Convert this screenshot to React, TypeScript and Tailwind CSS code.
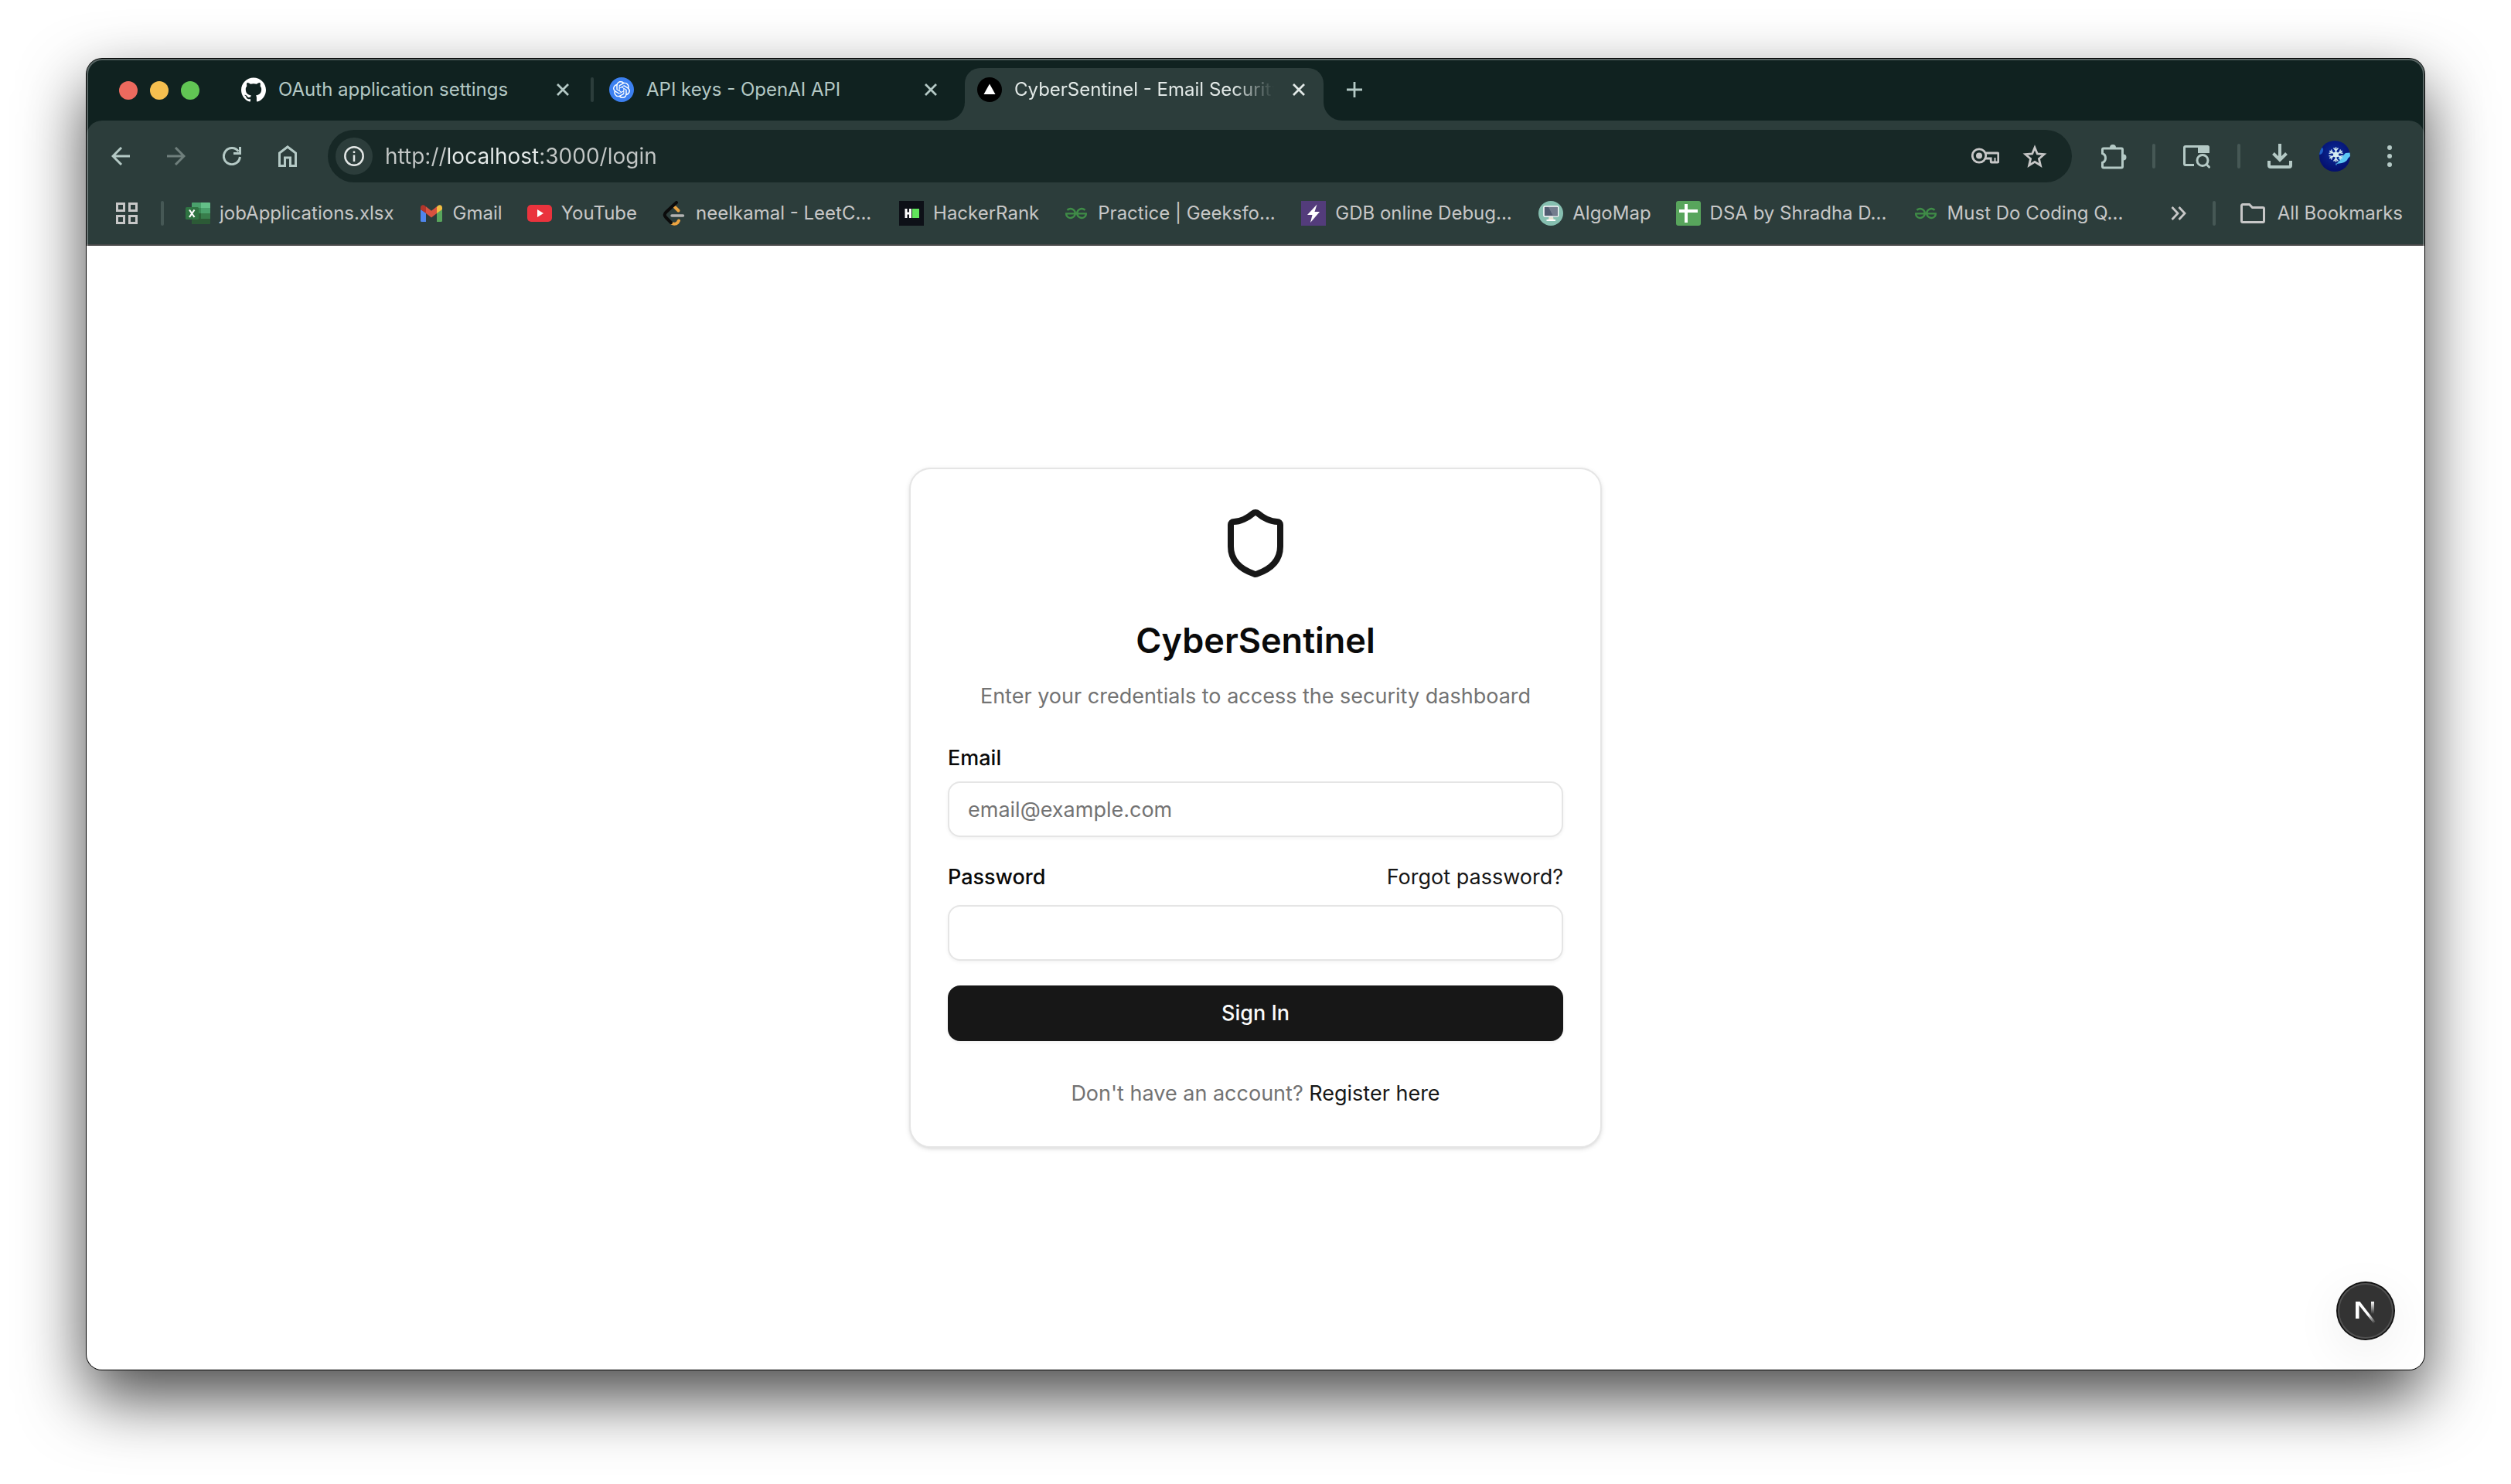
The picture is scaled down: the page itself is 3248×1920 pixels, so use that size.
import type { ReactNode } from "react";
import { Shield } from "lucide-react";
import { SiGeeksforgeeks, SiGithub, SiOpenai } from "react-icons/si";

/* ---------- toolbar icons ---------- */

const BackIcon = () => (
  <svg viewBox="0 0 24 24" className="size-6" fill="none" stroke="currentColor" strokeWidth="3">
    <path d="M24 12H2.5M13 1 2 12l11 11" />
  </svg>
);

const ForwardIcon = () => (
  <svg viewBox="0 0 24 24" className="size-6" fill="none" stroke="currentColor" strokeWidth="3">
    <path d="M0 12h21.5M11 1l11 11-11 11" />
  </svg>
);

const ReloadIcon = () => (
  <svg viewBox="0 0 24 24" className="size-6" fill="none" stroke="currentColor" strokeWidth="3">
    <path d="M22.4 13A10.5 10.5 0 1 1 20.5 6" />
    <path d="M22.5 0v8.5H14" />
  </svg>
);

const HomeIcon = () => (
  <svg viewBox="0 0 24 28" className="h-7 w-6" fill="none" stroke="currentColor" strokeWidth="3">
    <path d="M1.5 26.500V10L12 2l10.500 8v16.500H15.500V16h-7v10.500z" />
  </svg>
);

const InfoIcon = () => (
  <svg viewBox="0 0 26 26" className="size-[26px]" fill="none" stroke="currentColor" strokeWidth="2.500">
    <circle cx="13" cy="13" r="11.700" />
    <path d="M13 11.500V20M13 6.500V9" />
  </svg>
);

const KeyIcon = () => (
  <svg viewBox="0 0 36 22" className="h-[22px] w-9" fill="none" stroke="currentColor" strokeWidth="2.800">
    <circle cx="10" cy="10.500" r="8.700" />
    <circle cx="10" cy="10.500" r="4" fill="currentColor" stroke="none" />
    <path d="M18 7h16a.8.8 0 0 1 .8.8v10.400a.8.8 0 0 1-.8.800h-8a.8.8 0 0 1-.8-.8V14H18" />
    <path d="M30.500 13v6" strokeWidth="2" />
  </svg>
);

const StarIcon = () => (
  <svg viewBox="0 0 32 30" className="h-[30px] w-8" fill="none" stroke="currentColor" strokeWidth="2.800">
    <path d="m16 4 3.300 8 8.700.700-6.600 5.700 2 8.600L16 22.400 8.600 27l2-8.600L4 12.700l8.700-.7z" />
  </svg>
);

const PuzzleIcon = () => (
  <svg viewBox="0 0 34 34" className="size-[34px]" fill="none" stroke="currentColor" strokeWidth="3">
    <path d="M4 7h23a1.500 1.500 0 0 1 1.500 1.500v22A1.500 1.500 0 0 1 27 32H4a1.500 1.500 0 0 1-1.500-1.500V25.500a6.500 6.500 0 0 0 0-12V8.500A1.500 1.500 0 0 1 4 7z" />
    <path d="M12 6a4 4 0 0 1 8 0zM29.500 14.500a4 4 0 0 1 0 8z" fill="currentColor" stroke="none" />
  </svg>
);

const TabSearchIcon = () => (
  <svg viewBox="0 0 36 32" className="h-8 w-9" fill="none" stroke="currentColor" strokeWidth="3">
    <path d="M15 27.500H4A1.500 1.500 0 0 1 2.500 26V5A1.500 1.500 0 0 1 4 3.500h29" />
    <path d="M20 2h12.500A2.500 2.500 0 0 1 35 4.500V12H20z" fill="currentColor" stroke="none" />
    <circle cx="26" cy="21.500" r="7" />
    <path d="m30.500 26 5 5" />
  </svg>
);

const DownloadIcon = () => (
  <svg viewBox="0 0 32 32" className="size-8" fill="none" stroke="currentColor" strokeWidth="4">
    <path d="M16 0v21M7.500 12.500 16 21l8.500-8.500" />
    <path d="M2 22v6a2 2 0 0 0 2 2h24a2 2 0 0 0 2-2v-6" />
  </svg>
);

const MenuIcon = () => (
  <svg viewBox="0 0 6 28" className="h-7 w-1.5" fill="currentColor">
    <circle cx="3" cy="3" r="3" />
    <circle cx="3" cy="14" r="3" />
    <circle cx="3" cy="25" r="3" />
  </svg>
);

const CloseIcon = () => (
  <svg viewBox="0 0 16 16" className="size-4" fill="none" stroke="currentColor" strokeWidth="2.800">
    <path d="m1 1 14 14M15 1 1 15" />
  </svg>
);

const PlusIcon = () => (
  <svg viewBox="0 0 20 20" className="size-5" fill="none" stroke="currentColor" strokeWidth="2.800">
    <path d="M10 0v20M0 10h20" />
  </svg>
);

const GridIcon = () => (
  <svg viewBox="0 0 28 28" className="size-7" fill="none" stroke="currentColor" strokeWidth="3">
    <path d="M1.500 1.500h9v9h-9zM17.500 1.500h9v9h-9zM1.500 17.500h9v9h-9zM17.500 17.500h9v9h-9z" />
  </svg>
);

const FolderIcon = () => (
  <svg viewBox="0 0 32 26" className="h-[26px] w-8" fill="none" stroke="currentColor" strokeWidth="3">
    <path d="M3 1.500h8.500l4 4H29A1.500 1.500 0 0 1 30.500 7v16a1.500 1.500 0 0 1-1.500 1.500H3A1.500 1.500 0 0 1 1.500 23V3A1.500 1.500 0 0 1 3 1.500z" />
  </svg>
);

const MoreIcon = () => (
  <svg viewBox="0 0 20 18" className="h-[18px] w-5" fill="none" stroke="currentColor" strokeWidth="2.800">
    <path d="m1.500 1 7.500 8-7.500 8M10.500 1l7.500 8-7.500 8" />
  </svg>
);

const Avatar = () => (
  <svg viewBox="0 0 40 40" className="size-10">
    <defs>
      <radialGradient id="sky" cx="50%" cy="40%" r="60%">
        <stop offset="0" stopColor="#0a2a9a" />
        <stop offset="1" stopColor="#040f6c" />
      </radialGradient>
      <clipPath id="round">
        <circle cx="20" cy="20" r="20" />
      </clipPath>
    </defs>
    <g clipPath="url(#round)">
      <path fill="url(#sky)" d="M0 0h40v40H0z" />
      <path fill="#1f5fc4" d="M0 9q6-1 5 4t-5 5z" />
      <path fill="#5cc8f5" d="M40 15.500l-6 .5-4 4-6 3 3 2-5 5 7-1q7-2 8-6l3-3z" />
      <g stroke="#d5ecf2" strokeWidth="1.800">
        <path d="M21.500 8.500v19M13.300 13.300l16.400 9.500M13.300 22.700l16.400-9.500" />
        <path d="m18.500 9.500 3 3.500 3-3.500M18.500 26.500l3-3.500 3 3.500M12.500 16.500l4.500-1-1.500-4M30.500 16.500l-4.500-1 1.500-4M12.500 19.500l4.500 1-1.500 4M30.500 19.500l-4.500 1 1.500 4" strokeWidth="1.300" fill="none" />
      </g>
      <circle cx="21.500" cy="18" r="3.500" fill="#d5ecf2" />
      <path stroke="#4aa8e8" strokeWidth="1.500" strokeDasharray="2 2" d="M22 29.500v4" />
    </g>
  </svg>
);

/* ---------- favicons ---------- */

const OpenAiFavicon = () => (
  <span className="flex size-8 items-center justify-center rounded-full bg-[#3c80f0] text-white">
    <SiOpenai className="size-[22px]" />
  </span>
);

const VercelFavicon = () => (
  <svg viewBox="0 0 32 32" className="size-8">
    <circle cx="16" cy="16" r="16" fill="#000" />
    <path d="M16 8.500 23.500 22h-15z" fill="#fff" />
  </svg>
);

const ExcelFavicon = () => (
  <svg viewBox="0 0 32 28" className="h-7 w-8">
    <path fill="#4aa16c" d="M9 0h11v7H8V1a1 1 0 0 1 1-1z" />
    <path fill="#63c088" d="M20 0h11a1 1 0 0 1 1 1v6H20z" />
    <path fill="#3a8a55" d="M8 7h12v7H8z" />
    <path fill="#4aa16c" d="M20 7h12v7H20z" />
    <path fill="#2c6238" d="M8 14h12v14H9a1 1 0 0 1-1-1z" />
    <path fill="#387d4b" d="M20 14h12v7H20z" />
    <path fill="#2c5a36" d="M20 21h12v6a1 1 0 0 1-1 1H9l-1-7z" />
    <rect y="6" width="17" height="16" rx="1.500" fill="#2f7442" />
    <path d="m5 9.500 6.500 9.500M11.500 9.500 5 19" stroke="#fff" strokeWidth="2.200" />
  </svg>
);

const GmailFavicon = () => (
  <svg viewBox="0 0 32 32" className="size-8">
    <path fill="#4f86ec" d="M2 11v14.500A1.500 1.500 0 0 0 3.500 27H9V15z" />
    <path fill="#58a55c" d="M30 11v14.500a1.500 1.500 0 0 1-1.500 1.500H23V15z" />
    <path fill="#b3362b" d="M2 8.500C2 5.500 5 4.200 7.500 6L9 7.500V16l-7-5z" />
    <path fill="#f2bd42" d="M30 8.500c0-3-3-4.300-5.500-2.500L23 7.500V16l7-5z" />
    <path fill="#d9523f" d="m9 7.300 7 5.500 7-5.500V16l-7 5.500L9 16z" />
  </svg>
);

const YouTubeFavicon = () => (
  <svg viewBox="0 0 32 32" className="size-8">
    <rect y="5" width="32" height="22" rx="5" fill="#ea333d" />
    <path d="M13 11v10l8-5z" fill="#fff" />
  </svg>
);

const LeetCodeFavicon = () => (
  <svg viewBox="0 0 32 32" className="size-8" fill="none" strokeWidth="4" strokeLinecap="round">
    <path stroke="#eba340" d="m17 8 4.500 4.500M13.500 29q4 2 7-1l1.500-2.500" />
    <path stroke="#0b0b0b" d="M19 2 5.500 14.500q-3.500 3.500 0 7L12 28" />
    <path stroke="#b3b3b3" strokeWidth="3.500" d="M13 19h14.500" />
  </svg>
);

const HackerRankFavicon = () => (
  <svg viewBox="0 0 32 32" className="size-8">
    <path fill="#0d1017" d="M0 0h32v32H0z" />
    <path d="M9 10v12M14.500 10v12M9 16h5.500" stroke="#fff" strokeWidth="3" />
    <path fill="#61e35c" d="M17 10h9v12h-9z" />
  </svg>
);

const GeeksFavicon = () => <SiGeeksforgeeks className="size-8 px-0.5 text-[#3f8c47]" />;

const GdbFavicon = () => (
  <svg viewBox="0 0 32 32" className="size-8">
    <path fill="#533c7b" d="M0 0h32v32H0z" />
    <path fill="#fff" d="M20.500 4.500 8 18h6.500L12 28 24 14h-6.500z" />
  </svg>
);

const AlgoMapFavicon = () => (
  <svg viewBox="0 0 32 32" className="size-8">
    <circle cx="16" cy="16" r="16" fill="#86bfb0" />
    <rect x="7" y="7" width="18.500" height="13" rx="1" fill="#515b70" stroke="#fff" strokeWidth="1.500" />
    <path fill="#747d8e" d="M13 8h12v11.500h-6z" />
    <path fill="#e8e3d2" d="M13.500 21h5.500l.8 3.500h-7z" />
    <path fill="#fff" d="M10.500 24h11.500v2H10.500z" />
  </svg>
);

const DsaFavicon = () => (
  <svg viewBox="0 0 32 32" className="size-8">
    <rect width="32" height="32" rx="3" fill="#58a55c" />
    <path fill="#fff" d="M11 4h4v7h13v4H15v13h-4V15H4v-4h7z" />
  </svg>
);

/* ---------- browser chrome ---------- */

type TabProps = { icon: ReactNode; title: string; active?: boolean };

const flare = "absolute bottom-0 size-6 text-[#2c3d3b]";

function Tab({ icon, title, active = false }: TabProps) {
  const tone = active
    ? "bg-[#2c3d3b] text-[#e2e9e7]"
    : "text-[#b4c9c5]";
  return (
    <div className={`relative flex h-[68px] w-[464px] items-start gap-4 rounded-t-[20px] px-4 pt-3 ${tone}`}>
      {active && (
        <>
          <svg viewBox="0 0 24 24" className={`${flare} -left-6`} fill="currentColor">
            <path d="M24 0v24H0A24 24 0 0 0 24 0z" />
          </svg>
          <svg viewBox="0 0 24 24" className={`${flare} -right-6`} fill="currentColor">
            <path d="M0 0v24h24A24 24 0 0 1 0 0z" />
          </svg>
        </>
      )}
      <button type="button" className="flex min-w-0 flex-1 items-center gap-4 text-left">
        <span className="shrink-0">{icon}</span>
        <span
          className={`min-w-0 flex-1 overflow-hidden text-2xl whitespace-nowrap ${
            active ? "[mask-image:linear-gradient(to_right,black_84%,transparent)]" : ""
          }`}
        >
          {title}
        </span>
      </button>
      <button type="button" aria-label={`Close ${title}`} className="flex size-8 items-center justify-center">
        <CloseIcon />
      </button>
    </div>
  );
}

function TabStrip() {
  return (
    <div className="flex h-20 items-end bg-[#102220]">
      <div className="flex h-[68px] w-[184px] items-start gap-4 pt-[17px] pl-[42px]">
        <span className="size-6 rounded-full bg-[#ed6a5e]" />
        <span className="size-6 rounded-full bg-[#f5bf4f]" />
        <span className="size-6 rounded-full bg-[#61c554]" />
      </div>
      <Tab icon={<SiGithub className="size-8 text-white" />} title="OAuth application settings" />
      <span className="mx-1 mb-6 h-8 w-1 rounded-full bg-[#2c3d3b]" />
      <Tab icon={<OpenAiFavicon />} title="API keys - OpenAI API" />
      <span className="w-3" />
      <Tab icon={<VercelFavicon />} title="CyberSentinel - Email Security" active />
      <button
        type="button"
        aria-label="New tab"
        className="mb-6 ml-6 flex size-8 items-center justify-center text-[#b4c9c5]"
      >
        <PlusIcon />
      </button>
    </div>
  );
}

function IconButton({ label, className = "", children }: { label: string; className?: string; children: ReactNode }) {
  return (
    <button type="button" aria-label={label} className={`flex h-12 items-center justify-center ${className}`}>
      {children}
    </button>
  );
}

const Divider = () => <span className="h-8 w-1 rounded-full bg-[#465855]" />;

function Toolbar() {
  return (
    <div className="flex h-[92px] items-center rounded-t-[20px] bg-[#2c3d3b] pr-[42px] pl-5 text-[#b4c9c5]">
      <div className="flex">
        <IconButton label="Back" className="w-12"><BackIcon /></IconButton>
        <IconButton label="Forward" className="ml-6 w-12 text-[#6f7f7c]"><ForwardIcon /></IconButton>
        <IconButton label="Reload" className="ml-6 w-12"><ReloadIcon /></IconButton>
        <IconButton label="Home" className="ml-6 w-12"><HomeIcon /></IconButton>
      </div>
      <div className="ml-7 flex h-[68px] min-w-0 flex-1 items-center rounded-full bg-[#172826] pr-8 pl-2.5">
        <IconButton label="View site information" className="w-12 rounded-full bg-[#2c3d3b] text-[#e2e6e5]">
          <InfoIcon />
        </IconButton>
        <input
          aria-label="Address"
          type="text"
          defaultValue="http://localhost:3000/login"
          className="ml-4 min-w-0 flex-1 bg-[linear-gradient(to_right,#c3c7c6_80px,#e6ebea_80px,#e6ebea_199px,#c3c7c6_199px)] bg-clip-text text-[28px] text-transparent outline-none"
        />
        <div className="flex items-center gap-[30px] text-[#c7c7c7]">
          <IconButton label="Manage passwords" className="w-9"><KeyIcon /></IconButton>
          <IconButton label="Bookmark this page" className="w-8"><StarIcon /></IconButton>
        </div>
      </div>
      <IconButton label="Extensions" className="ml-9 w-9"><PuzzleIcon /></IconButton>
      <div className="ml-8 flex items-center gap-[35px]">
        <Divider />
        <IconButton label="Search tabs" className="w-9"><TabSearchIcon /></IconButton>
        <Divider />
        <IconButton label="Downloads" className="w-8"><DownloadIcon /></IconButton>
        <IconButton label="Profile" className="w-10"><Avatar /></IconButton>
      </div>
      <IconButton label="Customize and control" className="ml-12 w-1.5"><MenuIcon /></IconButton>
    </div>
  );
}

type Bookmark = { label: string; icon: ReactNode; clipped?: boolean };

const bookmarks: Bookmark[] = [
  { label: "jobApplications.xlsx", icon: <ExcelFavicon /> },
  { label: "Gmail", icon: <GmailFavicon /> },
  { label: "YouTube", icon: <YouTubeFavicon /> },
  { label: "neelkamal - LeetC...", icon: <LeetCodeFavicon />, clipped: true },
  { label: "HackerRank", icon: <HackerRankFavicon /> },
  { label: "Practice | Geeksfo...", icon: <GeeksFavicon />, clipped: true },
  { label: "GDB online Debug...", icon: <GdbFavicon />, clipped: true },
  { label: "AlgoMap", icon: <AlgoMapFavicon /> },
  { label: "DSA by Shradha D...", icon: <DsaFavicon />, clipped: true },
  { label: "Must Do Coding Q...", icon: <GeeksFavicon />, clipped: true },
];

function BookmarksBar() {
  return (
    <nav
      aria-label="Bookmarks"
      className="flex h-[70px] items-start border-b-2 border-[#4a4a4a] bg-[#2c3d3b] pt-3 pr-7 pl-[38px] text-2xl whitespace-nowrap text-[#c7c7c7]"
    >
      <button type="button" aria-label="Apps" className="flex h-8 items-center">
        <GridIcon />
      </button>
      <span className="ml-[30px] h-8 w-1 rounded-full bg-[#465855]" />
      <div className="ml-7 flex min-w-0 flex-1 gap-8">
        {bookmarks.map((b) => (
          <a key={b.label} href="#" className="flex h-8 items-center gap-3">
            {b.icon}
            <span className={b.clipped ? "w-[231px]" : ""}>{b.label}</span>
          </a>
        ))}
      </div>
      <div className="flex h-8 items-center">
        <button type="button" aria-label="More bookmarks">
          <MoreIcon />
        </button>
        <span className="ml-[34px] h-8 w-1 rounded-full bg-[#465855]" />
        <button type="button" className="ml-8 flex items-center gap-4">
          <FolderIcon />
          All Bookmarks
        </button>
      </div>
    </nav>
  );
}

/* ---------- login page ---------- */

const field =
  "h-[72px] w-full rounded-2xl border-2 border-[#e5e5e5] bg-white px-6 text-[27px] leading-10 text-[#0a0a0a] shadow-[0_2px_4px_rgba(0,0,0,0.05)] outline-none placeholder:text-[#737373]";

function LoginCard() {
  return (
    <form
      onSubmit={(e) => e.preventDefault()}
      className="flex w-full max-w-4xl flex-col rounded-[28px] border-2 border-[#e5e5e5] bg-white p-12 text-[27px] leading-10 text-[#0a0a0a] shadow-[0_2px_6px_rgba(0,0,0,0.1),0_2px_4px_-2px_rgba(0,0,0,0.1)]"
    >
      <Shield className="size-24 self-center text-[#171717]" />
      <h1 className="mt-[46px] text-center text-[45px] leading-16 font-semibold">CyberSentinel</h1>
      <p className="mt-5 text-center text-[#737373]">Enter your credentials to access the security dashboard</p>

      <label htmlFor="email" className="mt-10 font-medium">Email</label>
      <input id="email" type="email" placeholder="email@example.com" className={`mt-2.5 ${field}`} />

      <div className="mt-8 flex items-center justify-between">
        <label htmlFor="password" className="font-medium">Password</label>
        <a href="#" className="text-[#171717]">Forgot password?</a>
      </div>
      <input id="password" type="password" className={`mt-4 ${field}`} />

      <button
        type="submit"
        className="mt-8 h-[72px] rounded-2xl bg-[#171717] font-medium text-[#fafafa] shadow-[0_2px_4px_rgba(0,0,0,0.05)]"
      >
        Sign In
      </button>

      <p className="mt-12 text-center text-[#737373]">
        Don't have an account? <a href="#" className="text-[#171717]">Register here</a>
      </p>
    </form>
  );
}

function DevBadge() {
  return (
    <button
      type="button"
      aria-label="Open Next.js Dev Tools"
      className="absolute right-10 bottom-10 flex size-[72px] items-center justify-center rounded-full bg-[#333] pt-1 shadow-[inset_0_0_0_2px_#515151,0_0_0_2px_#121212,0_16px_64px_rgba(0,0,0,0.08)]"
    >
      <svg viewBox="0 0 26 28" className="h-7 w-[26px]" fill="none">
        <defs>
          <linearGradient id="diag" x1="4" y1="0" x2="25" y2="28" gradientUnits="userSpaceOnUse">
            <stop offset="0.600" stopColor="#fff" />
            <stop offset="1" stopColor="#fff" stopOpacity="0" />
          </linearGradient>
          <linearGradient id="stem" x1="0" y1="0" x2="0" y2="16" gradientUnits="userSpaceOnUse">
            <stop offset="0" stopColor="#fff" />
            <stop offset="1" stopColor="#fff" stopOpacity="0" />
          </linearGradient>
        </defs>
        <path d="M0 0h4.500v22H0z" fill="#fff" />
        <path d="M0 0h5.500L25.500 26l-2.500 2L3 3z" fill="url(#diag)" />
        <path d="M20 0h4v16h-4z" fill="url(#stem)" />
      </svg>
    </button>
  );
}

export default function App() {
  return (
    <div className="flex min-h-screen flex-col bg-white px-28 pt-19 pb-37 font-[Inter,sans-serif]">
      <div className="relative flex flex-1 flex-col overflow-hidden rounded-[20px] bg-white shadow-[0_0_0_1px_#000,0_36px_84px_rgba(0,0,0,0.72)]">
        <header className="bg-[#102220]">
          <TabStrip />
          <Toolbar />
          <BookmarksBar />
        </header>
        <main className="relative flex flex-1 items-center justify-center">
          <LoginCard />
          <DevBadge />
        </main>
        <div className="pointer-events-none absolute inset-0 rounded-[20px] shadow-[inset_0_0_0_2px_rgba(255,255,255,0.3)]" />
      </div>
    </div>
  );
}
